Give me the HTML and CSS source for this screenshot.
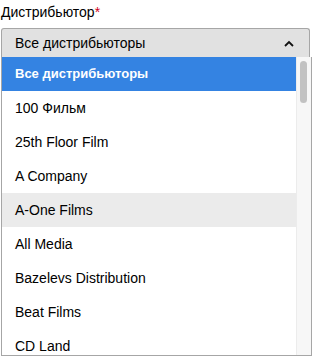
FILE: index.html
```html
<!DOCTYPE html>
<html lang="ru">

<head>
    <meta charset="UTF-8">
    <meta name="viewport" content="width=device-width, initial-scale=1.0">
    <title>Дистрибьютор</title>
    <link rel="stylesheet" href="styles.css">
</head>

<body>
    <div class="field">
        <label class="field-label">Дистрибьютор<span class="req">*</span></label>
        <div class="select">
            <span class="select-value">Все дистрибьюторы</span>
            <svg class="chevron" width="10" height="7" viewBox="0 0 10 7">
                <path d="M1 6 L5 2 L9 6" fill="none" stroke="#111" stroke-width="1.8"/>
            </svg>
        </div>
        <div class="dropdown">
            <ul class="options">
                <li class="selected">Все дистрибьюторы</li>
                <li>100 Фильм</li>
                <li>25th Floor Film</li>
                <li>A Company</li>
                <li class="hover">A-One Films</li>
                <li>All Media</li>
                <li>Bazelevs Distribution</li>
                <li>Beat Films</li>
                <li>CD Land</li>
            </ul>
            <div class="scrollbar">
                <div class="thumb"></div>
            </div>
        </div>
    </div>
</body>

</html>
```

FILE: styles.css
```css
* {
    margin: 0;
    padding: 0;
    box-sizing: border-box;
}

body {
    font-family: "Liberation Sans", Arial, sans-serif;
    font-size: 14px;
    color: #000;
    background-color: #fff;
}

.field {
    width: 313px;
    height: 356px;
    overflow: hidden;
}

.field-label {
    display: block;
    height: 28px;
    padding: 4px 0 0 1px;
    line-height: 16px;
}

.req {
    color: #d0021b;
}

.select {
    display: flex;
    align-items: center;
    justify-content: space-between;
    width: 309px;
    height: 29px;
    margin-left: 1px;
    padding: 0 15px 0 13px;
    background-color: #e1e1e1;
    border: 1px solid #a6a6a6;
    border-bottom: none;
    border-radius: 3px 3px 0 0;
}

.chevron {
    display: block;
}

.dropdown {
    display: flex;
    width: 311px;
    height: 299px;
    margin-left: 1px;
    border: 1px solid #a6a6a6;
    border-top: none;
    background-color: #fff;
}

.options {
    list-style: none;
    flex: 1;
}

.options li {
    height: 34px;
    line-height: 34px;
    padding-left: 13px;
    white-space: nowrap;
}

.options li.selected {
    background-color: #3483e2;
    color: #fff;
    font-size: 13px;
    font-weight: bold;
}

.options li.hover {
    background-color: #ebebeb;
}

.scrollbar {
    width: 15px;
    background-color: #f7f7f7;
    border-left: 1px solid #ececec;
    padding: 4px 3px 0 3px;
}

.thumb {
    width: 7px;
    height: 42px;
    border-radius: 4px;
    background-color: #c2c2c2;
}
```
